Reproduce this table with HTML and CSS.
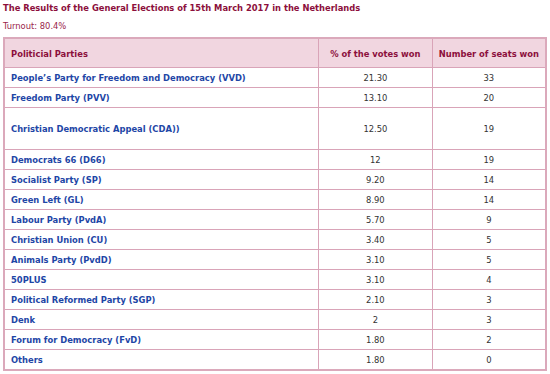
FILE: index.html
```html
<!DOCTYPE html>
<html>
<head>
<meta charset="utf-8">
<link rel="stylesheet" href="styles.css">
</head>
<body>
<h1 class="title">The Results of the General Elections of 15th March 2017 in the Netherlands</h1>
<p class="turnout">Turnout: 80.4%</p>
<table class="results">
  <thead>
    <tr><th class="party">Politicial Parties</th><th>% of the votes won</th><th>Number of seats won</th></tr>
  </thead>
  <tbody>
    <tr><td class="party">People’s Party for Freedom and Democracy (VVD)</td><td>21.30</td><td>33</td></tr>
    <tr><td class="party">Freedom Party (PVV)</td><td>13.10</td><td>20</td></tr>
    <tr class="tall"><td class="party">Christian Democratic Appeal (CDA))</td><td>12.50</td><td>19</td></tr>
    <tr><td class="party">Democrats 66 (D66)</td><td>12</td><td>19</td></tr>
    <tr><td class="party">Socialist Party (SP)</td><td>9.20</td><td>14</td></tr>
    <tr><td class="party">Green Left (GL)</td><td>8.90</td><td>14</td></tr>
    <tr><td class="party">Labour Party (PvdA)</td><td>5.70</td><td>9</td></tr>
    <tr><td class="party">Christian Union (CU)</td><td>3.40</td><td>5</td></tr>
    <tr><td class="party">Animals Party (PvdD)</td><td>3.10</td><td>5</td></tr>
    <tr><td class="party">50PLUS</td><td>3.10</td><td>4</td></tr>
    <tr><td class="party">Political Reformed Party (SGP)</td><td>2.10</td><td>3</td></tr>
    <tr><td class="party">Denk</td><td>2</td><td>3</td></tr>
    <tr><td class="party">Forum for Democracy (FvD)</td><td>1.80</td><td>2</td></tr>
    <tr><td class="party">Others</td><td>1.80</td><td>0</td></tr>
  </tbody>
</table>
</body>
</html>
```
FILE: styles.css
```css
html, body {
  margin: 0;
  padding: 0;
  background: #ffffff;
}
body {
  padding: 1px 3px 0 3px;
  font-family: "DejaVu Sans Condensed", "DejaVu Sans", Verdana, sans-serif;
  font-size: 9.3px;
}
.title {
  margin: 0;
  font-size: 9.3px;
  font-weight: bold;
  color: #8c0f3c;
  line-height: 14px;
}
.turnout {
  margin: 4px 0 0 0;
  font-size: 9.3px;
  color: #9a1e4a;
  line-height: 14px;
}
.results {
  margin-top: 4px;
  width: 544px;
  border-collapse: collapse;
  border: 2px solid #dba9bb;
  table-layout: fixed;
}
.results th, .results td {
  border: 1px solid #d9a4b8;
  padding: 0 6px;
  text-align: center;
  white-space: nowrap;
}
.results th {
  height: 28px;
  background: #f1d6e0;
  color: #8c0f3c;
  font-weight: bold;
}
.results th.party, .results td.party {
  text-align: left;
  width: 301px;
}
.results td {
  height: 19px;
  color: #333333;
}
.results td.party {
  color: #1e46a6;
  font-weight: bold;
}
.results tr.tall td {
  height: 41px;
}
```
